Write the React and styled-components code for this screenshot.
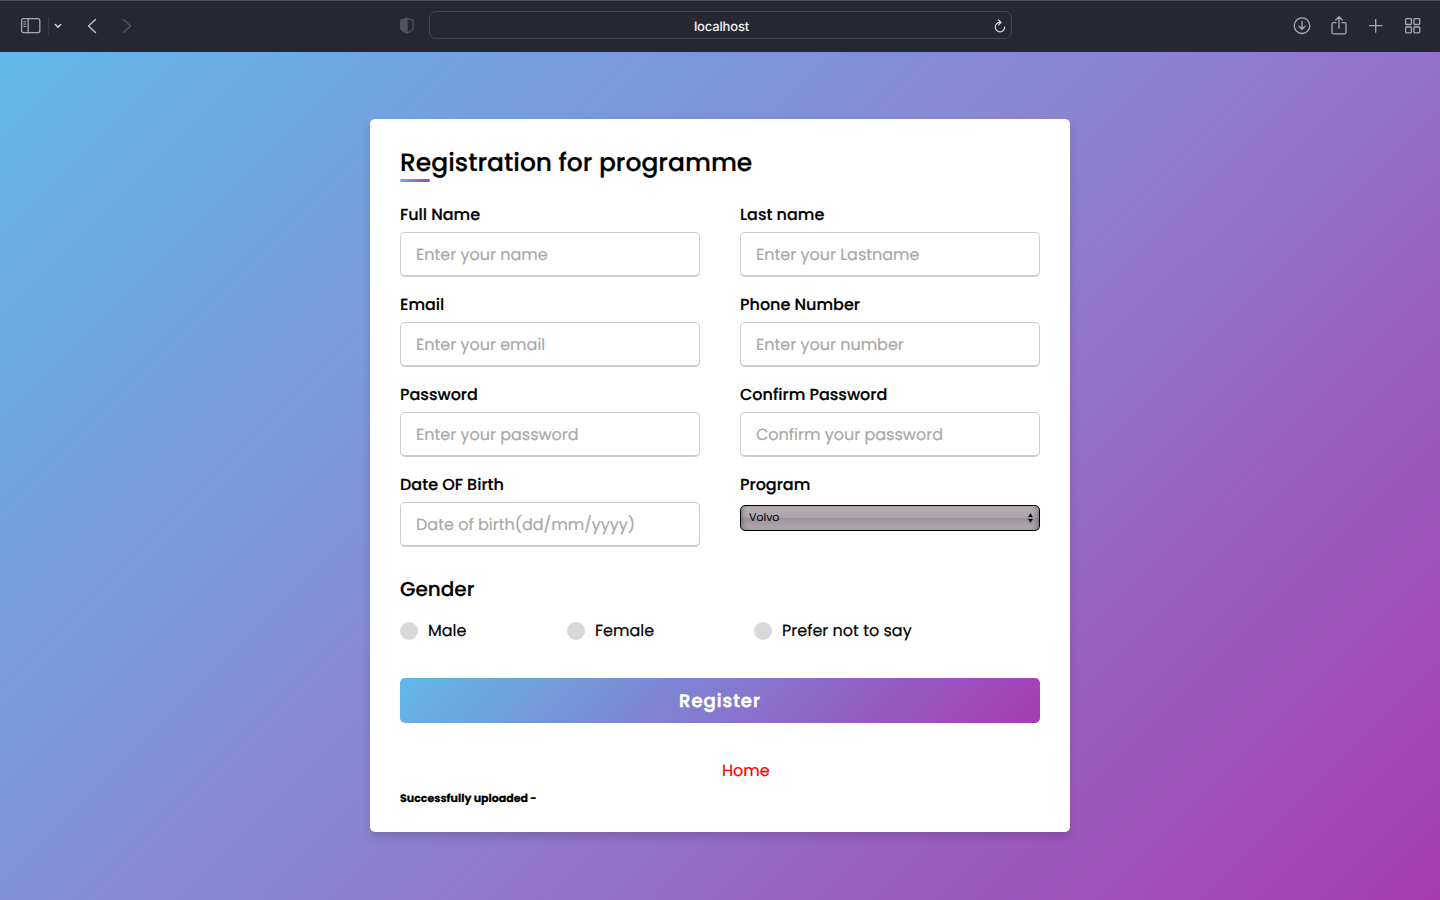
import React from "react";
import styled, { createGlobalStyle } from "styled-components";

const GRADIENT = "linear-gradient(135deg, #61b8ea, #a83bb4)";
const PAGE_GRADIENT = "linear-gradient(135deg, #61b8ea, #8b83d0 50%, #a83bb4)";

const GlobalStyle = createGlobalStyle`
  * { box-sizing: border-box; margin: 0; padding: 0; }
  body {
    font-family: Poppins, Inter, sans-serif;
    color: #000;
    overflow: hidden;
    text-rendering: geometricPrecision;
    -webkit-text-stroke: 0.2px;
  }
`;

const Screen = styled.div`
  display: flex;
  flex-direction: column;
  height: 100vh;
`;

const Toolbar = styled.header`
  display: grid;
  grid-template-columns: 429px 583px 1fr;
  align-items: center;
  flex: none;
  height: 52px;
  padding-bottom: 3px;
  background: #252833;
  border-top: 1px solid #50535e;
  color: #a7aab4;
`;

const ToolGroup = styled.div`
  display: flex;
  align-items: center;
  justify-content: ${(p) => p.$justify || "flex-start"};
  padding: ${(p) => p.$padding};
`;

const Icon = styled.svg`
  display: block;
  flex: none;
  width: ${(p) => p.$w}px;
  height: ${(p) => p.$h}px;
  margin-left: ${(p) => p.$gap || 0}px;
  fill: none;
  stroke: ${(p) => p.$color || "currentColor"};
  stroke-width: ${(p) => p.$stroke || 1.3};
  stroke-linecap: round;
  stroke-linejoin: round;
`;

const Separator = styled.span`
  width: 1px;
  height: 18px;
  margin-left: 7px;
  background: #3a3d48;
`;

const AddressBar = styled.div`
  display: grid;
  grid-template-columns: 1fr auto 1fr;
  align-items: center;
  height: 28px;
  padding-right: 5px;
  border: 1px solid #42454f;
  border-radius: 7px;
  color: #f3f3f5;
  font: 500 13px/20px Inter, sans-serif;
  -webkit-text-stroke: 0;
`;

const Address = styled.span`
  grid-column: 2;
  padding: 4px 0 0 7px;
  letter-spacing: -0.15px;
`;

const Reload = styled(Icon)`
  justify-self: end;
  margin-top: 2px;
`;

const Page = styled.main`
  display: flex;
  flex: 1;
  align-items: center;
  justify-content: center;
  padding-bottom: 1px;
  background: ${PAGE_GRADIENT};
`;

const Card = styled.section`
  width: 700px;
  height: 713px;
  padding: 25px 30px;
  background: #fff;
  border-radius: 5px;
  box-shadow: 0 5px 10px rgba(0, 0, 0, 0.15);
`;

const Title = styled.h1`
  height: 35px;
  font-size: 25px;
  font-weight: 500;
  line-height: 37px;
  white-space: nowrap;
`;

const TitleRule = styled.div`
  width: 30px;
  height: 3px;
  border-radius: 5px;
  background: ${GRADIENT};
`;

const Fields = styled.div`
  display: grid;
  grid-template-columns: 300px 300px;
  grid-auto-rows: 74px;
  gap: 16px 40px;
  margin-top: 21px;
`;

const Field = styled.label`
  display: flex;
  flex-direction: column;
`;

const FieldName = styled.span`
  height: 29px;
  font-size: 16px;
  font-weight: 500;
  line-height: 23px;
`;

const TextInput = styled.input`
  width: 100%;
  height: 45px;
  padding: 0 15px;
  border: 1px solid #ccc;
  border-bottom-width: 2px;
  border-radius: 5px;
  outline: none;
  background: #fff;
  font: 400 16px Poppins, Inter, sans-serif;
  text-rendering: inherit;
  &::placeholder { color: #a9a9a9; opacity: 1; }
`;

const SelectBox = styled.div`
  display: flex;
  align-items: center;
  justify-content: space-between;
  height: 26px;
  margin-top: 3px;
  padding: 0 5px 2px 8px;
  border: 1px solid #000;
  border-radius: 5px;
  background: linear-gradient(#b9b3b9 0%, #aaa3aa 48%, #9b939b 52%, #b1abb1 100%);
  box-shadow: inset 4px 0 4px -2px rgba(80, 70, 80, 0.45), inset -4px 0 4px -2px rgba(80, 70, 80, 0.45);
  font-size: 11px;
  -webkit-text-stroke: 0;
`;

const SelectArrows = styled(Icon)`
  margin-top: 2px;
`;

const GenderTitle = styled.h2`
  margin-top: 27px;
  font-size: 20px;
  font-weight: 500;
  line-height: 30px;
`;

const Options = styled.div`
  display: grid;
  grid-template-columns: 167px 187px 1fr;
  margin-top: 15px;
`;

const Option = styled.label`
  display: flex;
  align-items: center;
  gap: 10px;
  height: 24px;
  font-size: 16px;
  line-height: 22px;
  padding-bottom: 1px;
`;

const Dot = styled.span`
  width: 18px;
  height: 18px;
  margin-top: 1px;
  border-radius: 50%;
  background: #d9d9d9;
`;

const Register = styled.button`
  display: block;
  width: 100%;
  height: 45px;
  margin-top: 35px;
  padding-top: 1px;
  border: 0;
  border-radius: 5px;
  background: ${GRADIENT};
  color: #fff;
  font: 500 18px Poppins, Inter, sans-serif;
  letter-spacing: 1px;
  text-rendering: inherit;
  -webkit-text-stroke: 0.6px;
`;

const HomeLink = styled.a`
  display: block;
  width: max-content;
  margin: 36px 0 0 322px;
  color: #f00;
  font-size: 16px;
  line-height: 24px;
`;

const Status = styled.p`
  margin-top: 7px;
  font-size: 11px;
  font-weight: 700;
  line-height: 16px;
`;

const FIELDS = [
  { name: "Full Name", hint: "Enter your name" },
  { name: "Last name", hint: "Enter your Lastname" },
  { name: "Email", hint: "Enter your email" },
  { name: "Phone Number", hint: "Enter your number" },
  { name: "Password", hint: "Enter your password" },
  { name: "Confirm Password", hint: "Confirm your password" },
  { name: "Date OF Birth", hint: "Date of birth(dd/mm/yyyy)" },
];

function BrowserBar() {
  return (
    <Toolbar>
      <ToolGroup $padding="1px 15px 0 21px">
        <Icon $w={20} $h={16} viewBox="0 0 20 16">
          <rect x="0.6" y="0.7" width="18.2" height="14" rx="2" />
          <path d="M7.1.8v14" />
          <path d="M2.8 3.8h2M2.8 6.1h2M2.8 8.4h2" strokeWidth="1" />
        </Icon>
        <Separator />
        <Icon $w={8} $h={6} $gap={5} $stroke={1.5} $color="#d0d2d9" viewBox="0 0 8 6">
          <path d="M1.3 1.5 4 4.1 6.7 1.5" />
        </Icon>
        <Icon $w={10} $h={16} $gap={25} $stroke={1.5} $color="#b9bcc6" viewBox="0 0 10 16">
          <path d="M8.5 1.5 1.5 8l7 6.5" />
        </Icon>
        <Icon $w={10} $h={16} $gap={25} $stroke={1.5} $color="#50535e" viewBox="0 0 10 16">
          <path d="M1.5 1.5 8.5 8l-7 6.5" />
        </Icon>
        <Icon $w={14} $h={17} $gap={268} $stroke={1.3} $color="#50535e" viewBox="0 0 14 17">
          <path d="M7 1.3 13.2 3.4v7.2c0 2.4-3.2 4.3-6.2 5.4C4 14.9.8 13 .8 10.6V3.4Z" />
          <path d="M7 1.3V16C4 14.9.8 13 .8 10.6V3.4Z" fill="#50535e" />
        </Icon>
      </ToolGroup>
      <AddressBar>
        <Address>localhost</Address>
        <Reload $w={12} $h={14} $stroke={1.2} $color="#d9dae0" viewBox="0 0 12 14">
          <path d="M6.2 3.4A4.7 4.7 0 1 0 10.7 8" />
          <path d="M4.5 1 7 3.5 4.6 5.9" />
        </Reload>
      </AddressBar>
      <ToolGroup $justify="flex-end" $padding="1px 19px 0 0">
        <Icon $w={18} $h={18} viewBox="0 0 18 18">
          <circle cx="9" cy="8.7" r="7.8" />
          <path d="M9 4.5v7.7M6 9.3l3 3 3-3" />
        </Icon>
        <Icon $w={16} $h={20} $gap={20} viewBox="0 0 16 20">
          <path d="M5 6.7H2.5Q1 6.7 1 8.2v8.2q0 1.5 1.5 1.5h11q1.5 0 1.5-1.5V8.2Q15 6.7 13.5 6.7H11" />
          <path d="M8 12.2V1M4.7 4 8 .7 11.3 4" />
        </Icon>
        <Icon $w={14} $h={14} $gap={22} viewBox="0 0 14 14">
          <path d="M6.7.6v12.6M.4 6.7H13" />
        </Icon>
        <Icon $w={16} $h={16} $gap={22} viewBox="0 0 16 16">
          <rect x="0.6" y="0.7" width="5.8" height="5.8" rx="0.8" />
          <rect x="8.9" y="0.7" width="5.8" height="5.8" rx="0.8" />
          <rect x="0.6" y="9" width="5.8" height="5.8" rx="0.8" />
          <rect x="8.9" y="9" width="5.8" height="5.8" rx="0.8" />
        </Icon>
      </ToolGroup>
    </Toolbar>
  );
}

export default function App() {
  return (
    <Screen>
      <GlobalStyle />
      <BrowserBar />
      <Page>
        <Card>
          <Title>Registration for programme</Title>
          <TitleRule />
          <Fields>
            {FIELDS.map((f) => (
              <Field key={f.name}>
                <FieldName>{f.name}</FieldName>
                <TextInput placeholder={f.hint} />
              </Field>
            ))}
            <Field as="div">
              <FieldName>Program</FieldName>
              <SelectBox>
                <span>Volvo</span>
                <SelectArrows $w={7} $h={10} $stroke={0.1} viewBox="0 0 7 10">
                  <path d="M1.2 4 3.5.3 5.8 4ZM1.2 6l2.3 3.7L5.8 6Z" fill="#000" />
                </SelectArrows>
              </SelectBox>
            </Field>
          </Fields>
          <GenderTitle>Gender</GenderTitle>
          <Options>
            <Option><Dot />Male</Option>
            <Option><Dot />Female</Option>
            <Option><Dot />Prefer not to say</Option>
          </Options>
          <Register>Register</Register>
          <HomeLink>Home</HomeLink>
          <Status>Successfully uploaded -</Status>
        </Card>
      </Page>
    </Screen>
  );
}
